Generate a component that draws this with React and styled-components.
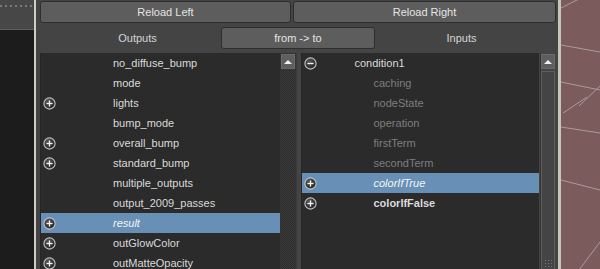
import React from 'react'
import styled, { createGlobalStyle } from 'styled-components'

const Global = createGlobalStyle`
    html, body {
        margin: 0;
        padding: 0;
        background: #444444;
        overflow: hidden;
    }
    body {
        font-family: "Liberation Sans", Arial, sans-serif;
        font-size: 11px;
    }
`

const Screen = styled.div`
    display: flex;
    width: 600px;
    height: 269px;
    overflow: hidden;
    background: #444444;
`

const SideStrip = styled.div`
    width: 34px;
    display: flex;
    flex-direction: column;
    border-right: 2px solid #cfcdc4;
`

const SideHead = styled.div`
    height: 29px;
    background: #474747;
    border-bottom: 1px solid #5c5c5c;
    &::before {
        content: '';
        display: block;
        margin: 5px 0 0 0;
        height: 2px;
        background: repeating-linear-gradient(90deg, #7a7a7a 0 2px, transparent 2px 5px);
    }
`

const SideBody = styled.div`
    flex: 1;
    background: #1c1c1c;
`

const Panel = styled.div`
    width: 516px;
    padding: 0 2px 0 4px;
    display: flex;
    flex-direction: column;
    background: #444444;
`

const ButtonRow = styled.div`
    display: flex;
    gap: 2px;
    margin-top: 1px;
`

const Button = styled.div`
    width: ${(p) => p.w || 'auto'};
    flex: ${(p) => (p.w ? 'none' : 1)};
    height: 20px;
    border: 1px solid #2e2e2e;
    border-radius: 3px;
    background: #5d5d5d;
    color: #e4e4e4;
    display: flex;
    align-items: center;
    justify-content: center;
`

const HeadRow = styled.div`
    display: grid;
    grid-template-columns: 181px 154px 1fr;
    align-items: center;
    height: 30px;
    color: #d4d4d4;
`

const HeadLabel = styled.div`
    text-align: center;
    padding-left: ${(p) => p.pl || 0}px;
    padding-right: ${(p) => p.pr || 0}px;
`

const Lists = styled.div`
    flex: 1;
    display: flex;
    min-height: 0;
`

const List = styled.div`
    width: ${(p) => p.w}px;
    background: #2b2b2b;
    display: flex;
    flex-direction: column;
    overflow: hidden;
    border-left: 1px solid #262626;
`

const Row = styled.div`
    height: 20px;
    flex: none;
    display: flex;
    align-items: center;
    position: relative;
    padding-left: ${(p) => p.indent}px;
    background: ${(p) => (p.sel ? '#6890b7' : 'transparent')};
    color: ${(p) => (p.dim ? '#7e7e7e' : p.sel ? '#f4f4f4' : '#dadada')};
    font-style: ${(p) => (p.sel ? 'italic' : 'normal')};
    font-weight: ${(p) => (p.bold ? 'bold' : 'normal')};
    white-space: nowrap;
`

const IconSlot = styled.span`
    position: absolute;
    left: 2px;
    top: 4px;
    width: 13px;
    height: 13px;
    display: flex;
`

const Scrollbar = styled.div`
    width: 15px;
    flex: none;
    display: flex;
    flex-direction: column;
    background: ${(p) =>
        p.checker
            ? 'repeating-conic-gradient(#3c3c3c 0 25%, #2b2b2b 0 50%) 0 0 / 2px 2px'
            : '#444444'};
    border-left: 1px solid #333;
`

const UpButton = styled.div`
    height: 13px;
    margin: 1px 1px 1px 0;
    background: #5e5e5e;
    border: 1px solid #6a6a6a;
    display: flex;
    align-items: center;
    justify-content: center;
    &::after {
        content: '';
        border-left: 4px solid transparent;
        border-right: 4px solid transparent;
        border-bottom: 4px solid #f0f0f0;
    }
`

const Thumb = styled.div`
    flex: 1;
    margin: 1px 1px 0 0;
    border: 1px solid #5e5e5e;
    border-bottom: none;
    background: #444444;
    display: flex;
    flex-direction: column;
    justify-content: flex-end;
    align-items: center;
    &::after {
        content: '';
        width: 9px;
        height: 8px;
        margin-bottom: 2px;
        background: radial-gradient(circle, #777 0.8px, transparent 1px) 0 0 / 3px 3px;
    }
`

const Gap = styled.div`
    width: ${(p) => p.w}px;
    flex: none;
    background: ${(p) => p.bg || '#444444'};
    border-left: ${(p) => (p.line ? '1px solid #3a3a3a' : 'none')};
`

const Viewport = styled.div`
    flex: 1;
    background: #7b5b5c;
    border-left: 3px solid #c8c5ba;
    svg {
        display: block;
    }
`

const Expander = ({ open }) => (
    <svg width="13" height="13" viewBox="0 0 13 13">
        <defs>
            <radialGradient id={open ? 'gm' : 'gp'} cx="0.4" cy="0.35" r="0.7">
                <stop offset="0" stopColor="#5a5a5a" />
                <stop offset="1" stopColor="#1e1e1e" />
            </radialGradient>
        </defs>
        <circle cx="6.5" cy="6.5" r="5.6" fill={`url(#${open ? 'gm' : 'gp'})`} stroke="#c4c4c4" strokeWidth="1.1" />
        <line x1="3.4" y1="6.5" x2="9.6" y2="6.5" stroke="#f2f2f2" strokeWidth="1.3" />
        {!open && <line x1="6.5" y1="3.4" x2="6.5" y2="9.6" stroke="#f2f2f2" strokeWidth="1.3" />}
    </svg>
)

const outputs = [
    { name: 'no_diffuse_bump' },
    { name: 'mode' },
    { name: 'lights', plus: true },
    { name: 'bump_mode' },
    { name: 'overall_bump', plus: true },
    { name: 'standard_bump', plus: true },
    { name: 'multiple_outputs' },
    { name: 'output_2009_passes' },
    { name: 'result', plus: true, sel: true },
    { name: 'outGlowColor', plus: true },
    { name: 'outMatteOpacity', plus: true },
]

const inputs = [
    { name: 'condition1', minus: true, root: true },
    { name: 'caching', dim: true },
    { name: 'nodeState', dim: true },
    { name: 'operation', dim: true },
    { name: 'firstTerm', dim: true },
    { name: 'secondTerm', dim: true },
    { name: 'colorIfTrue', plus: true, sel: true },
    { name: 'colorIfFalse', plus: true, bold: true },
]

const renderRow = (item) => (
    <Row
        key={item.name}
        indent={item.root ? 53 : 72}
        sel={item.sel}
        dim={item.dim}
        bold={item.bold}
    >
        {(item.plus || item.minus) && (
            <IconSlot>
                <Expander open={item.minus} />
            </IconSlot>
        )}
        {item.name}
    </Row>
)

const App = () => {
    return (
        <Screen>
            <Global />
            <SideStrip>
                <SideHead />
                <SideBody />
            </SideStrip>
            <Panel>
                <ButtonRow>
                    <Button w="249px">Reload Left</Button>
                    <Button>Reload Right</Button>
                </ButtonRow>
                <HeadRow>
                    <HeadLabel pl={14}>Outputs</HeadLabel>
                    <Button>from -&gt; to</Button>
                    <HeadLabel pr={8}>Inputs</HeadLabel>
                </HeadRow>
                <Lists>
                    <List w={241}>{outputs.map(renderRow)}</List>
                    <Scrollbar checker>
                        <UpButton />
                    </Scrollbar>
                    <Gap w={4} line />
                    <List w={240}>{inputs.map(renderRow)}</List>
                    <Gap w={1} />
                    <Scrollbar>
                        <UpButton />
                        <Thumb />
                    </Scrollbar>
                </Lists>
            </Panel>
            <Viewport>
                <svg width="39" height="269" viewBox="0 0 39 269">
                    <g stroke="#a99c9c" strokeWidth="1" fill="none">
                        <line x1="0" y1="8" x2="20" y2="-2" />
                        <line x1="0" y1="45" x2="39" y2="52" />
                        <line x1="0" y1="82" x2="39" y2="90" />
                        <line x1="18" y1="106" x2="39" y2="86" />
                        <line x1="2" y1="113" x2="26" y2="97" />
                        <line x1="0" y1="127" x2="39" y2="133" />
                        <line x1="0" y1="180" x2="39" y2="190" />
                        <line x1="18" y1="270" x2="39" y2="242" />
                    </g>
                </svg>
            </Viewport>
        </Screen>
    )
}

export default App
